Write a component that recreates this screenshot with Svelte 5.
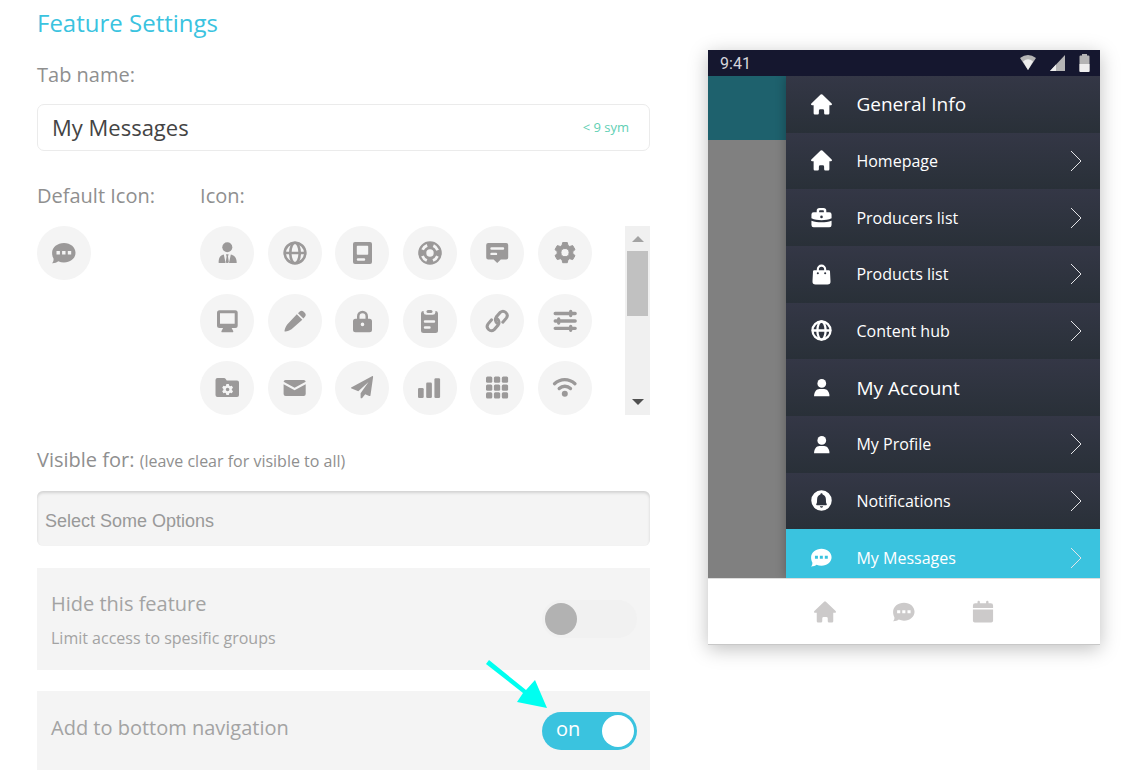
<script lang="ts">
	type MenuItem = { label: string; icon: string; heading?: boolean; active?: boolean };

	const icons = ['manager', 'globe', 'kiosk', 'support', 'comment', 'gear',
		'monitor', 'pencil', 'lock', 'clipboard', 'link', 'sliders',
		'folder', 'mail', 'plane', 'bars', 'grid', 'wifi'];

	const menu: MenuItem[] = [
		{ label: 'General Info', icon: 'home', heading: true },
		{ label: 'Homepage', icon: 'home' },
		{ label: 'Producers list', icon: 'briefcase' },
		{ label: 'Products list', icon: 'bag' },
		{ label: 'Content hub', icon: 'globe' },
		{ label: 'My Account', icon: 'user', heading: true },
		{ label: 'My Profile', icon: 'user' },
		{ label: 'Notifications', icon: 'bell' },
		{ label: 'My Messages', icon: 'chat', active: true }
	];

	const bottomNav = ['home', 'chat', 'calendar'];

	let tabName = $state('My Messages');
	let selectedIcon = $state('chat');
	let hidden = $state(false);
	let inBottomNav = $state(true);
</script>

{#snippet icon(name: string)}
	<svg class="icon" viewBox="0 0 24 24" aria-hidden="true">
		{#if name === 'home'}
			<path d="M11 .7a1.500 1.500 0 0 1 2 0l10.600 10.100c.7.8.3 2-.8 2H21V22a1.400 1.400 0 0 1-1.400 1.400h-3.200A1.400 1.400 0 0 1 15 22v-3a1.600 1.600 0 0 0-1.600-1.600h-2.800A1.600 1.600 0 0 0 9 19v3a1.400 1.400 0 0 1-1.400 1.400H4.400A1.400 1.400 0 0 1 3 22v-9.200H1.200c-1.100 0-1.500-1.200-.8-2z" />
		{:else if name === 'chat'}
			<path fill-rule="evenodd" d="M12 2c6.500 0 11.500 4.300 11.500 9.800s-5 9.700-11.500 9.700c-2 0-4-.4-5.700-1.200C4.900 21.500 2.500 22.300 0 22.200c1.200-1.200 1.800-3 1.500-4.600C.5 16 .1 14 .1 11.800.1 6.300 5.500 2 12 2zM4.500 10v3.400h3.400V10zm5.600 0v3.400h3.400V10zm5.700 0v3.400h3.400V10z" />
		{:else if name === 'manager'}
			<circle cx="12.300" cy="6.200" r="5" />
			<path d="M8.800 13.500l1.700 7.900V22H3.700c-.3-4.500 1.300-7.700 5.100-8.500zM15.800 13.500l-1.700 7.900V22h7.600c.3-4.500-2.100-7.700-5.900-8.500zM11 13.300h2.600l-.6 2.200.8 5.200-.6 1.300h-1.800l-.6-1.300.8-5.200z" />
		{:else if name === 'globe'}
			<g class="line globe">
				<circle cx="12" cy="12" r="10.300" />
				<ellipse cx="12" cy="12" rx="4.700" ry="10.300" />
				<path d="M2 12h20" />
			</g>
		{:else if name === 'kiosk'}
			<path fill-rule="evenodd" d="M5 1h15a2 2 0 0 1 2 2v18a2 2 0 0 1-2 2H5a2 2 0 0 1-2-2V3a2 2 0 0 1 2-2zm2.500 3.700a.7.7 0 0 0-.7.700V13a.7.7 0 0 0 .7.700h10a.7.7 0 0 0 .7-.7V5.400a.7.7 0 0 0-.7-.7zM8 17.300a1.200 1.200 0 0 0 0 2.500h6a1.200 1.200 0 0 0 0-2.500z" />
		{:else if name === 'support'}
			<path fill-rule="evenodd" d="M12 .2a11.800 11.800 0 1 0 0 23.600A11.800 11.800 0 0 0 12 .2zm0 8.100a3.700 3.700 0 1 1 0 7.400 3.700 3.700 0 0 1 0-7.400z" />
			<circle class="dash" cx="12" cy="12" r="8.100" />
		{:else if name === 'comment'}
			<path fill-rule="evenodd" d="M3.200 2h18a2 2 0 0 1 2 2v12.500a2 2 0 0 1-2 2h-5.400L12.200 22l-3.600-3.500H3.200a2 2 0 0 1-2-2V4a2 2 0 0 1 2-2zM6.500 6.300a1.200 1.200 0 0 0 0 2.400H18a1.200 1.200 0 0 0 0-2.400zm0 5.400a1.200 1.200 0 0 0 0 2.400H11a1.200 1.200 0 0 0 0-2.400z" />
		{:else if name === 'gear'}
			<path class="rounded" fill-rule="evenodd" d="M9.700 1.500h4.600l.7 3 1.700 1 3-.9 2.300 4-2.200 2v2l2.200 2-2.300 4-3-.9-1.700 1-.7 3H9.700l-.7-3-1.700-1-3 .9-2.300-4 2.200-2v-2L2 8.600l2.300-4 3 .9L9 4.500zM12 7.500a4.100 4.100 0 1 0 0 8.200 4.100 4.100 0 0 0 0-8.200z" />
		{:else if name === 'monitor'}
			<path fill-rule="evenodd" d="M4.500 1.300h15.700a2.500 2.500 0 0 1 2.500 2.500v12.700a2.500 2.500 0 0 1-2.500 2.500h-3.600l1.600 3c.3.700 0 1.300-.8 1.300H7.300c-.8 0-1.100-.6-.8-1.300L8.100 19H4.500A2.500 2.500 0 0 1 2 16.500V3.800a2.500 2.500 0 0 1 2.500-2.500zM5 4.300v10.400h14.700V4.300z" />
		{:else if name === 'pencil'}
			<path d="M13.800 5.200l5.500 5.500L8.500 20.200c-1.700 1.200-4 2-6.200 2.400-.6.1-.9-.3-.8-.9.500-2.300 1.300-4.300 2.700-6.200zM15 4.200l1.500-1.400a3 3 0 0 1 4.200 0l1 1a3 3 0 0 1 0 4.200l-1.300 1.500z" />
		{:else if name === 'lock'}
			<path fill-rule="evenodd" d="M7 9.700V7.200a5.500 5.500 0 0 1 11 0v2.500h1.500A2.500 2.500 0 0 1 22 12.200v8.600a2.500 2.500 0 0 1-2.500 2.500h-14A2.500 2.500 0 0 1 3 20.800v-8.600a2.500 2.500 0 0 1 2.500-2.500zm2.500 0h6V7.200a3 3 0 0 0-6 0zm3 3.900a1.800 1.800 0 1 0 0 3.600 1.800 1.800 0 0 0 0-3.600z" />
		{:else if name === 'clipboard'}
			<path fill-rule="evenodd" d="M5 2h.6v1.300a2.700 2.700 0 0 0 2.700 2.500h6.400a2.700 2.700 0 0 0 2.700-2.500V2h.6a2.500 2.500 0 0 1 2 2.400v17.100a2.500 2.500 0 0 1-2.500 2.500h-12A2.500 2.500 0 0 1 3 21.500V4.400A2.500 2.500 0 0 1 5 2zm2 9.300a1.200 1.200 0 0 0 0 2.400h9a1.200 1.200 0 0 0 0-2.400zm0 6a1.200 1.200 0 0 0 0 2.400h4.500a1.200 1.200 0 0 0 0-2.400z" />
			<rect x="8.500" y="1" width="6" height="3" rx="1.500" />
		{:else if name === 'link'}
			<g class="line">
				<path d="M12.200 14.300a4.600 4.600 0 0 1-1-6.300l4-4.600a4.200 4.200 0 0 1 6.100 5.700l-3.500 4.100" />
				<path d="M12.200 9.700a4.600 4.600 0 0 1 1 6.300l-4 4.600a4.200 4.200 0 0 1-6.100-5.700l3.500-4.100" />
			</g>
		{:else if name === 'sliders'}
			<g class="line bold">
				<path d="M2.200 4.500h20M2.200 12h20M2.200 19.300h20M17.700 2.500v4M5.700 10v4M17.700 17.300v4" />
			</g>
		{:else if name === 'folder'}
			<path fill-rule="evenodd" d="M2.500 2H9c.7 0 1.300.3 1.700.9l1 1.700H22a2 2 0 0 1 2 2V19a2 2 0 0 1-2 2H2.500a2 2 0 0 1-2-2V4a2 2 0 0 1 2-2zm8.900 6-.5 1.700-.8.500-1.700-.4-1.200 2 1.200 1.200v1l-1.200 1.200 1.200 2 1.700-.4.800.5.500 1.700h2.400l.5-1.700.8-.5 1.700.4 1.200-2-1.200-1.200v-1l1.200-1.200-1.200-2-1.700.4-.8-.5-.5-1.700zm1.200 3.700a1.800 1.800 0 1 1 0 3.600 1.800 1.800 0 0 1 0-3.600z" />
		{:else if name === 'mail'}
			<path d="M2.500 4h18.200a2 2 0 0 1 2 1.700L11.600 11.800.6 5.700A2 2 0 0 1 2.500 4zM.6 8.300l11 6 11.100-6v9.600a2 2 0 0 1-2 2H2.600a2 2 0 0 1-2-2z" />
		{:else if name === 'plane'}
			<path d="M22 .2c.7-.4 1.200 0 1.100.8L20.500 19.200c-.1.800-.6 1-1.300.7l-4-1.700-3 3.700c-.7.800-1.600.5-1.600-.5v-4.200L18.500 6 8.300 15.200 1.600 12.600c-.8-.4-.8-1 0-1.400z" />
		{:else if name === 'bars'}
			<rect x="0" y="12" width="5.700" height="10" rx="1.300" />
			<rect x="8.200" y="6.500" width="5.700" height="15.500" rx="1.300" />
			<rect x="16.400" y="2.300" width="5.700" height="19.700" rx="1.300" />
		{:else if name === 'grid'}
			{#each [0.5, 8.4, 16.3] as y}
				{#each [1, 8.9, 16.8] as x}
					<rect {x} {y} width="6.300" height="6.300" rx="1.500" />
				{/each}
			{/each}
		{:else if name === 'wifi'}
			<g class="line bold">
				<path d="M1.500 7.700C7.500 2.200 16 2.200 22 7.700M6.200 12.500c3.200-3 8.100-3 11.300 0" />
			</g>
			<circle cx="11.800" cy="17.700" r="3" />
		{:else if name === 'briefcase'}
			<path fill-rule="evenodd" d="M6.500 6V4.300A3.300 3.300 0 0 1 9.800 1h4.400a3.300 3.300 0 0 1 3.300 3.300V6H21a2.500 2.500 0 0 1 2.500 2.500v4.300C20 14.400 16 15 12 15S4 14.400.5 12.800V8.500A2.500 2.500 0 0 1 3 6zm2.800 0h5.400V4.500a.8.8 0 0 0-.8-.8h-3.800a.8.8 0 0 0-.8.800zM12 9.800a1.500 1.500 0 1 0 0 3 1.500 1.500 0 0 0 0-3zM.5 15.600c3.500 1.300 7.500 1.800 11.500 1.800s8-.5 11.500-1.800v4.900A2.500 2.500 0 0 1 21 23H3a2.500 2.500 0 0 1-2.500-2.500z" />
		{:else if name === 'bag'}
			<path fill-rule="evenodd" d="M6.600 7V6a5.400 5.400 0 0 1 10.800 0v1h3c.8 0 1.200.4 1.300 1.200l.6 11.600A3.500 3.500 0 0 1 18.800 23.500H5.200a3.500 3.500 0 0 1-3.500-3.700l.6-11.600C2.400 7.400 2.800 7 3.600 7zM9 7h6V6a3 3 0 0 0-6 0zm-1.200 2.300a1.200 1.200 0 1 0 0 2.400 1.200 1.200 0 0 0 0-2.400zm8.400 0a1.200 1.200 0 1 0 0 2.400 1.200 1.200 0 0 0 0-2.400z" />
		{:else if name === 'user'}
			<circle cx="12.300" cy="7.300" r="5" />
			<path d="M3.500 22c0-5 2.800-8.200 6-8.200h5.600c3.200 0 6 3.200 6 8.200z" />
		{:else if name === 'bell'}
			<path fill-rule="evenodd" d="M12 .3a11.700 11.700 0 1 0 0 23.400A11.700 11.700 0 0 0 12 .3zm0 3.500c.8 0 1.200.5 1.300 1.200 2.400.7 3.600 2.700 3.700 5.400l.2 4 .8 1.800c.3.700 0 1.300-.8 1.300H6.800c-.8 0-1.100-.6-.8-1.300l.8-1.800.2-4C7.100 7.700 8.300 5.700 10.700 5c.1-.7.500-1.200 1.300-1.200zM10.200 18.700h3.600c-.2 1.100-.8 1.600-1.800 1.600s-1.600-.5-1.800-1.600z" />
		{:else if name === 'calendar'}
			<path d="M1 7.700V5A2.500 2.500 0 0 1 3.500 2.500H6V1a1.300 1.300 0 0 1 2.600 0v1.500h6.800V1A1.300 1.300 0 0 1 18 1v1.500h2.500A2.500 2.500 0 0 1 23 5v2.700zM1 9.200h22V21.500a2 2 0 0 1-2 2H3a2 2 0 0 1-2-2z" />
		{/if}
	</svg>
{/snippet}

<main class="page">
	<form class="settings">
		<h1>Feature Settings</h1>

		<label class="label" for="tab-name">Tab name:</label>
		<div class="name-field">
			<input id="tab-name" type="text" bind:value={tabName} />
			<span class="limit">&lt; 9 sym</span>
		</div>

		<div class="icon-section">
			<div class="default-icon">
				<div class="label">Default Icon:</div>
				<button type="button" class="icon-button" aria-label="chat" onclick={() => (selectedIcon = 'chat')}>
					{@render icon('chat')}
				</button>
			</div>
			<div class="icon-choice">
				<div class="label">Icon:</div>
				<div class="picker">
					<div class="icon-grid">
						{#each icons as name}
							<button type="button" class="icon-button" aria-label={name} aria-pressed={selectedIcon === name} onclick={() => (selectedIcon = name)}>
								{@render icon(name)}
							</button>
						{/each}
					</div>
					<div class="scrollbar" aria-hidden="true">
						<span class="arrow up"></span>
						<span class="thumb"></span>
						<span class="arrow down"></span>
					</div>
				</div>
			</div>
		</div>

		<label class="label" for="visible-for">Visible for: <small>(leave clear for visible to all)</small></label>
		<input id="visible-for" class="options" type="text" placeholder="Select Some Options" />

		<div class="panel">
			<div>
				<label class="panel-title" for="hide-feature">Hide this feature</label>
				<p>Limit access to spesific groups</p>
			</div>
			<label class="switch" class:on={hidden}>
				<input id="hide-feature" type="checkbox" bind:checked={hidden} />
				{#if hidden}<span>on</span>{/if}
				<i class="knob"></i>
			</label>
		</div>

		<div class="panel compact">
			<label class="panel-title" for="bottom-nav">Add to bottom navigation</label>
			<label class="switch" class:on={inBottomNav}>
				<input id="bottom-nav" type="checkbox" bind:checked={inBottomNav} />
				{#if inBottomNav}<span>on</span>{/if}
				<i class="knob"></i>
			</label>
			<svg class="pointer" viewBox="0 0 64 52" aria-hidden="true">
				<path d="M4 1 41 31 50 21 62 49 32 43 38 34 1 5z" />
			</svg>
		</div>
	</form>

	<section class="phone">
		<div class="status">
			<span>9:41</span>
			<svg viewBox="0 0 72 20" aria-hidden="true">
				<path class="dim" d="M0 5Q8-1 16 5L8 17z" />
				<path d="M3 8.500Q8 4 13 8.500L8 17z" />
				<path class="dim" d="M45 2v16H30z" />
				<path d="M36 11.500V18h-6z" />
				<path class="dim" d="M62 1h5v1.500h1.500q1 0 1 1V18q0 1-1 1h-8q-1 0-1-1V3.500q0-1 1-1H62z" />
				<path d="M59.500 11h10v7q0 1-1 1h-8q-1 0-1-1z" />
			</svg>
		</div>

		<div class="screen">
			<div class="backdrop"></div>
			<nav class="drawer">
				<ul>
					{#each menu as item}
						<li>
							<a href="#menu" class:heading={item.heading} class:active={item.active}>
								{@render icon(item.icon)}
								<span>{item.label}</span>
								{#if !item.heading}
									<svg class="chevron" viewBox="0 0 12 22" aria-hidden="true"><path d="M1 1l10 10L1 21" /></svg>
								{/if}
							</a>
						</li>
					{/each}
				</ul>
			</nav>
		</div>

		<nav class="bottom">
			{#each bottomNav as name}
				<a href="#bottom" aria-label={name}>{@render icon(name)}</a>
			{/each}
		</nav>
	</section>
</main>

<style>
	:global(body) {
		background: #fff;
		font-family: 'Open Sans', sans-serif;
		color: #8f8f8f;
	}

	.page {
		display: grid;
		grid-template-columns: 61fr 39fr;
		gap: 58px;
		align-items: start;
		padding: 7px 27px 13px 37px;
	}

	h1, p, ul {
		margin: 0;
		padding: 0;
	}

	input, button {
		box-sizing: border-box;
		margin: 0;
		font-family: inherit;
	}

	.icon {
		display: block;
		width: 24px;
		height: 24px;
		fill: currentColor;
		overflow: visible;
	}

	.line {
		fill: none;
		stroke: currentColor;
		stroke-width: 3;
		stroke-linecap: round;
	}

	.bold {
		stroke-width: 3.3;
	}

	.globe {
		stroke-width: 2.6;
	}

	.rounded {
		stroke: currentColor;
		stroke-linejoin: round;
	}

	.dash {
		fill: none;
		stroke: #f4f4f4;
		stroke-width: 2.8;
		stroke-dasharray: 6.4 6.323;
		stroke-dashoffset: -3.2;
	}

	/* Settings form */
	.settings {
		display: flex;
		flex-direction: column;
		min-width: 0;
	}

	h1 {
		margin-bottom: 22px;
		font-size: 24px;
		font-weight: 400;
		line-height: 32px;
		color: #3ac3df;
	}

	.label {
		display: block;
		margin-bottom: 16px;
		font-size: 20px;
		line-height: 28px;
	}

	.label small {
		font-size: 16px;
	}

	.name-field {
		display: flex;
		align-items: center;
		height: 45px;
		margin: -1px 0 31px;
		border: 1px solid #ebebeb;
		border-radius: 7px;
	}

	.name-field input {
		flex: 1;
		min-width: 0;
		height: 100%;
		padding: 0 14px 2px;
		border: 0;
		background: none;
		font-size: 22px;
		color: #444;
		outline: none;
	}

	.limit {
		padding: 0 20px 2px 0;
		font-size: 13px;
		color: #5fcfb4;
	}

	.icon-section {
		display: flex;
		justify-content: space-between;
		margin-bottom: 31px;
	}

	.icon-choice {
		width: 450px;
	}

	.icon-button {
		display: grid;
		place-items: center;
		width: 54px;
		height: 54px;
		padding: 0;
		border: 0;
		border-radius: 50%;
		background: #f4f4f4;
		color: #9b9999;
		cursor: pointer;
	}

	.picker {
		display: flex;
		justify-content: space-between;
		height: 189px;
	}

	.icon-grid {
		display: grid;
		grid-template-columns: repeat(6, 54px);
		justify-content: space-between;
		align-content: space-between;
		width: 392px;
	}

	.scrollbar {
		display: flex;
		flex-direction: column;
		align-items: center;
		box-sizing: border-box;
		width: 25px;
		padding: 10px 0;
		background: #f0f0f0;
	}

	.arrow {
		border: 6px solid transparent;
	}

	.up {
		border-top: 0;
		border-bottom-color: #a3a3a3;
	}

	.down {
		margin-top: auto;
		border-bottom: 0;
		border-top-color: #505050;
	}

	.thumb {
		width: 21px;
		height: 65px;
		margin-top: 9px;
		background: #c1c1c1;
	}

	.options {
		width: 100%;
		height: 55px;
		margin-bottom: 22px;
		padding: 5px 8px 0;
		border: 0;
		border-radius: 6px;
		background: #f4f4f4;
		box-shadow: inset 0 2px 3px rgba(0, 0, 0, 0.14);
		font-family: 'Liberation Sans', Arial, sans-serif;
		font-size: 18px;
		outline: none;
	}

	.options::placeholder {
		color: #999;
	}

	.panel {
		position: relative;
		display: flex;
		justify-content: space-between;
		align-items: center;
		box-sizing: border-box;
		min-height: 102px;
		margin-bottom: 21px;
		padding: 0 13px 0 14px;
		background: #f4f4f4;
		color: #a3a3a3;
	}

	.compact {
		min-height: 79px;
		margin-bottom: 0;
	}

	.panel-title {
		display: block;
		padding: 4px 0 6px;
		font-size: 20px;
		line-height: 28px;
	}

	.compact .panel-title {
		padding-top: 0;
	}

	.panel p {
		font-size: 16px;
		line-height: 28px;
	}

	.switch {
		display: flex;
		align-items: center;
		box-sizing: border-box;
		width: 95px;
		height: 38px;
		padding: 0 3px;
		border-radius: 19px;
		background: #f1f1f1;
		font-size: 20px;
		color: #fff;
		cursor: pointer;
	}

	.switch input {
		appearance: none;
		width: 0;
		height: 0;
	}

	.switch span {
		padding: 0 0 4px 11px;
	}

	.knob {
		width: 32px;
		height: 32px;
		border-radius: 50%;
		background: #b2b2b2;
	}

	.on {
		background: #3ac3df;
	}

	.on .knob {
		margin-left: auto;
		background: #fff;
	}

	/* Arrow drawn across the panel towards the switch */
	.pointer {
		position: absolute;
		top: -32px;
		right: 101px;
		width: 64px;
		height: 52px;
		fill: #00fff0;
	}

	/* Phone preview */
	.phone {
		min-width: 0;
		margin-top: 43px;
		background: #fff;
		border-bottom: 1px solid #c8c8c8;
		box-shadow: 0 4px 18px rgba(0, 0, 0, 0.25);
	}

	.status {
		display: flex;
		justify-content: space-between;
		align-items: center;
		height: 26px;
		padding: 0 8px 0 12px;
		background: #15172f;
		font: 16px Roboto, sans-serif;
		color: #d5d5dc;
	}

	.status svg {
		width: 72px;
		height: 20px;
		fill: #eee;
	}

	.status .dim {
		fill: #b4b4b4;
	}

	.screen {
		display: flex;
		height: 502px;
		overflow: hidden;
		background: #808080;
	}

	.backdrop {
		flex: 1;
		height: 64px;
		background: #1e616d;
	}

	.drawer {
		width: 80%;
		box-shadow: 0 0 10px rgba(0, 0, 0, 0.3);
	}

	/* The last row runs under the bottom bar */
	.drawer ul {
		display: grid;
		grid-auto-rows: 1fr;
		height: 510px;
		list-style: none;
	}

	.drawer a {
		display: flex;
		align-items: center;
		box-sizing: border-box;
		height: 100%;
		padding: 0 18px 0 25px;
		background: linear-gradient(#343746, #293038);
		font-size: 16px;
		color: #fff;
		text-decoration: none;
	}

	.drawer a.heading {
		font-size: 19px;
	}

	.drawer a.active {
		background: #3ac3df;
	}

	.drawer .icon {
		width: 21px;
		height: 21px;
		margin-right: 24px;
	}

	.drawer span {
		flex: 1;
	}

	.chevron {
		width: 12px;
		height: 22px;
		fill: none;
		stroke: #e4e5e8;
	}

	.bottom {
		display: flex;
		justify-content: center;
		align-items: center;
		gap: 57px;
		height: 65px;
		border-top: 1px solid #ddd;
	}

	.bottom a {
		color: #cccaca;
	}

	.bottom .icon {
		width: 22px;
		height: 22px;
	}
</style>
